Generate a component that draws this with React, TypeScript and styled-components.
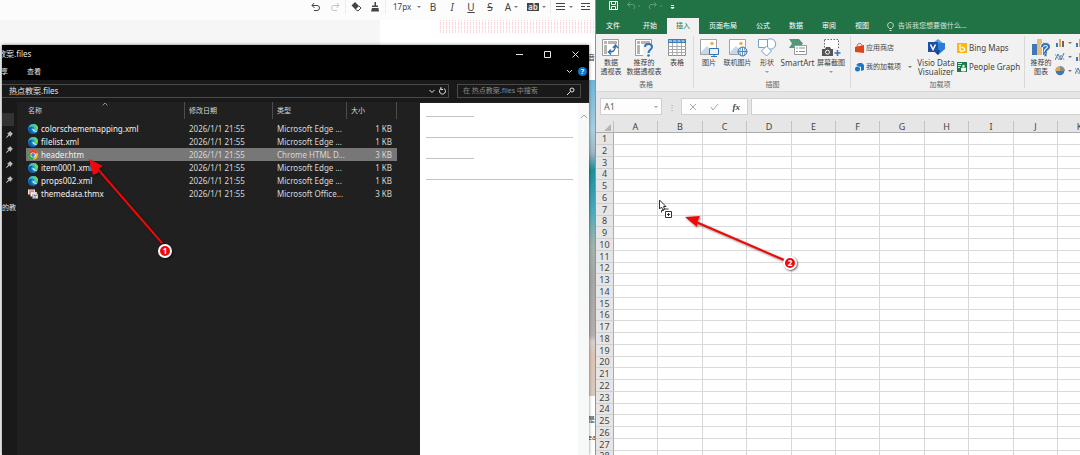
import React from "react";
import styled, { createGlobalStyle } from "styled-components";

const GlobalStyle = createGlobalStyle`
  * { box-sizing: border-box; }
  html, body { margin: 0; padding: 0; }
  body {
    font-family: "Noto Sans", "Noto Sans CJK SC", sans-serif;
    font-size: 8px;
    line-height: 10px;
    overflow: hidden;
  }
  button, input, select {
    font: inherit;
    color: inherit;
    background: none;
    border: 0;
    margin: 0;
    padding: 0;
    outline: 0;
    appearance: none;
  }
  button { white-space: nowrap; }
  svg { display: block; flex: none; }
  table { border-collapse: separate; border-spacing: 0; }
`;

const Desktop = styled.main`
  position: relative;
  display: grid;
  grid-template-columns: minmax(0, 595fr) minmax(0, 485fr);
  height: 100vh;
  overflow: hidden;
  background: #fff;
`;

const LeftSide = styled.div`
  position: relative;
  display: grid;
  min-width: 0;
  overflow: hidden;
`;

/* ---------- editor behind the file window ---------- */

const Editor = styled.section`
  position: relative;
  display: flex;
  flex-direction: column;
  min-width: 0;
  overflow: hidden;
  background: #f6f6f6;
`;

const EditorTools = styled.div`
  display: flex;
  align-items: center;
  gap: 1px;
  height: 20px;
  padding: 0 0 6px 307px;
  background: #fcfcfc;
  color: #444;
`;

const Tool = styled.button<{ $w?: number; $faint?: boolean }>`
  display: flex;
  flex: none;
  align-items: center;
  justify-content: center;
  gap: 3px;
  width: ${(p) => p.$w ?? 18}px;
  height: 14px;
  font-size: 10px;
  color: ${(p) => (p.$faint ? "#c4c4c4" : "#444")};
`;

const ToolSelect = styled.select`
  flex: none;
  width: 26px;
  padding-left: 6px;
  overflow: visible;
  font-size: 8px;
`;

const Dot = styled.span`
  flex: none;
  width: 0;
  height: 0;
  border: 2px solid transparent;
  border-top-color: currentColor;
  border-bottom: 0;
  opacity: 0.7;
`;

const DotCell = styled.span`
  display: flex;
  justify-content: center;
  width: 9px;
`;

const ToolRule = styled.span`
  flex: none;
  width: 1px;
  height: 14px;
  background: #ececec;
`;

const Highlight = styled.span`
  padding: 0 1px;
  font-size: 8px;
  line-height: 8px;
  font-weight: 700;
  color: #ddd;
  background: #444;
`;

const Sheet = styled.div`
  flex: 1;
  margin-left: 380px;
  padding-left: 60px;
  background: #fff;
`;

const Hatch = styled.div`
  height: 14px;
  background:
    repeating-linear-gradient(0deg, #fff 0 1px, transparent 1px 4px),
    repeating-linear-gradient(90deg, #fad7db 0 1px, #fff 1px 3px);
`;

const Photo = styled.div`
  position: absolute;
  top: 80px;
  right: 0;
  width: 6px;
  height: 316px;
  background: linear-gradient(#6db5d8 0, #a9cede 50px, #9fb7c4 72px, #1d8d9c 90px, #49a9bd 130px, #9fb3ad 165px, #a5a5a5 200px, #b5aeac 255px, #d4d1cf 262px, #dcc4b2 275px, #d8c9ba 310px);
`;

const Peek = styled.span<{ $top: number }>`
  position: absolute;
  top: ${(p) => p.$top}px;
  right: 0;
  width: 7px;
  overflow: hidden;
  white-space: nowrap;
  font-size: 7px;
  color: #333;
`;

/* ---------- file window ---------- */

const Explorer = styled.section`
  position: absolute;
  top: 45px;
  right: 6px;
  bottom: 0;
  left: 2px;
  display: flex;
  flex-direction: column;
  color: #e4e4e4;
  background: #202020;
  box-shadow: 0 0 3px rgba(0, 0, 0, 0.5);
`;

const TitleBar = styled.header`
  display: flex;
  align-items: center;
  height: 18px;
  overflow: hidden;
  white-space: nowrap;
  background: #000;
`;

const Title = styled.span`
  flex: 1;
  margin-left: -4px;
`;

const WindowButton = styled.button`
  display: grid;
  place-items: center;
  width: 28px;
  height: 18px;
`;

const MenuBar = styled.nav`
  display: flex;
  align-items: center;
  height: 17px;
  overflow: hidden;
  font-size: 7px;
  background: #000;
`;

const MenuItem = styled.button<{ $cut?: boolean }>`
  margin-left: ${(p) => (p.$cut ? "-1px" : "19px")};
`;

const MenuEnd = styled.div`
  display: flex;
  align-items: center;
  gap: 5px;
  margin: 0 2px 0 auto;
`;

const Help = styled.button`
  width: 9px;
  height: 9px;
  border-radius: 5px;
  font-weight: 700;
  font-size: 7px;
  line-height: 9px;
  color: #fff;
  background: #0b78d0;
`;

const AddressRow = styled.div`
  display: flex;
  gap: 8px;
  height: 22px;
  padding: 4px 8px 4px 0;
  background: #191919;
`;

const AddressBox = styled.div`
  display: flex;
  flex: 1;
  align-items: center;
  gap: 4px;
  padding: 0 2px 0 7px;
  border: 1px solid #4a4a4a;
  border-left: 0;
`;

const Path = styled.span`
  flex: 1;
`;

const SearchBox = styled.label`
  display: flex;
  align-items: center;
  width: 124px;
  padding: 0 5px;
  border: 1px solid #4a4a4a;
  font-size: 7px;
  & input { flex: 1; min-width: 0; }
  & input::placeholder { color: #8a8a8a; opacity: 1; }
`;

const ExplorerBody = styled.div`
  display: flex;
  flex: 1;
  min-height: 0;
`;

const NavPane = styled.aside`
  display: flex;
  flex-direction: column;
  width: 15px;
  padding-top: 11px;
  overflow: hidden;
  background: #191919;
`;

const NavActive = styled.div`
  height: 13px;
  margin: 0 3px 1px 0;
  background: #333;
`;

const PinRow = styled.div`
  display: flex;
  align-items: center;
  justify-content: center;
  height: 15px;
`;

const NavText = styled.div`
  padding-top: 16px;
  overflow: hidden;
  font-size: 7px;
  white-space: nowrap;
`;

const Listing = styled.div`
  flex: 1;
  min-width: 0;
  padding-left: 9px;
`;

const Files = styled.table`
  table-layout: fixed;
  width: 371px;
  color: #d6d6d6;
  & col:nth-child(1) { width: 159px; }
  & col:nth-child(2) { width: 88px; }
  & col:nth-child(3) { width: 74px; }
`;

const FileHead = styled.th<{ $sorted?: boolean }>`
  height: 20px;
  padding: 0 0 2px ${(p) => (p.$sorted ? 2 : 4)}px;
  font-size: 7px;
  font-weight: 400;
  text-align: left;
  background: linear-gradient(#4c4c4c, #4c4c4c) right 0 top 0 / 1px 17px no-repeat;
`;

const HeadInner = styled.span`
  display: flex;
  align-items: flex-start;
  justify-content: space-between;
  height: 10px;
  padding-right: 77px;
  & svg { margin-top: -4px; opacity: 0.6; }
`;

const FileRow = styled.tr<{ $selected?: boolean }>`
  background: ${(p) => (p.$selected ? "#777" : "none")};
`;

const FileCell = styled.td<{ $right?: boolean }>`
  height: 13px;
  padding: 0 ${(p) => (p.$right ? 5 : 0)}px 0 4px;
  overflow: hidden;
  text-align: ${(p) => (p.$right ? "right" : "left")};
  white-space: nowrap;
`;

const FileName = styled.span`
  display: flex;
  align-items: center;
  gap: 3px;
  margin-left: -2px;
  color: #f0f0f0;
`;

const Preview = styled.div`
  display: flex;
  width: 169px;
  margin-top: 1px;
  background: #fff;
`;

const PreviewPage = styled.div`
  flex: 1;
  padding: 13px 5px 0 6px;
`;

const PreviewLine = styled.hr<{ $short?: boolean }>`
  width: ${(p) => (p.$short ? "48px" : "100%")};
  height: 1px;
  margin: 0 0 20px;
  border: 0;
  background: #c4c4c4;
`;

const PreviewScroll = styled.div`
  display: flex;
  justify-content: center;
  width: 11px;
  padding-top: 10px;
  color: #a5a5a5;
  background: #f7f8f8;
`;

/* ---------- spreadsheet ---------- */

const Excel = styled.section`
  display: flex;
  flex-direction: column;
  min-width: 0;
  overflow: hidden;
  border-left: 1px solid #8d9694;
  color: #444;
  background: #e6e6e6;
`;

const QuickBar = styled.div`
  display: flex;
  flex: none;
  align-items: flex-start;
  gap: 8px;
  height: 18px;
  padding: 1px 0 0 13px;
  color: #fff;
  background: #217346;
`;

const Tabs = styled.nav`
  display: flex;
  flex: none;
  gap: 1px;
  height: 16px;
  padding-left: 1px;
  overflow: hidden;
  font-size: 7px;
  color: #fff;
  background: #217346;
`;

const Tab = styled.button<{ $active?: boolean; $file?: boolean }>`
  flex: none;
  padding: 0 9px;
  margin-right: ${(p) => (p.$file ? 4 : 0)}px;
  color: ${(p) => (p.$active ? "#217346" : "#fff")};
  background: ${(p) => (p.$active ? "#f1f1f1" : "none")};
`;

const Tell = styled.button`
  display: flex;
  align-items: center;
  gap: 4px;
  padding: 0 0 0 8px;
  color: #d3e5da;
`;

const Ribbon = styled.div`
  display: flex;
  flex: none;
  height: 58px;
  overflow: hidden;
  background: #f1f1f1;
  border-bottom: 1px solid #d8d8d8;
`;

const Group = styled.div<{ $w: number; $pad?: number }>`
  display: flex;
  flex: none;
  flex-direction: column;
  width: ${(p) => p.$w}px;
  padding: 4px 0 0 ${(p) => p.$pad ?? 0}px;
  background: linear-gradient(#d9d9d9, #d9d9d9) right 0 top 2px / 1px 52px no-repeat;
`;

const GroupItems = styled.div`
  display: flex;
  height: 42px;
`;

const GroupName = styled.div`
  font-size: 7px;
  text-align: center;
  color: #666;
`;

const Big = styled.button<{ $w: number; $latin?: boolean }>`
  display: flex;
  flex: none;
  flex-direction: column;
  align-items: center;
  gap: 1px;
  width: ${(p) => p.$w}px;
  font-size: ${(p) => (p.$latin ? 8 : 7)}px;
  line-height: 9px;
`;

const BigLabel = styled.span`
  display: flex;
  flex-direction: column;
  align-items: center;
`;

const CaretLine = styled.span`
  display: grid;
  place-items: center;
  height: 9px;
  color: #777;
`;

const Stack = styled.div<{ $w: number }>`
  display: flex;
  flex: none;
  flex-direction: column;
  gap: 7px;
  width: ${(p) => p.$w}px;
  padding-top: 4px;
`;

const Small = styled.button<{ $latin?: boolean }>`
  display: flex;
  align-items: center;
  gap: 2px;
  height: 12px;
  font-size: ${(p) => (p.$latin ? 8 : 7)}px;
  & > ${Dot} { margin-left: 5px; }
`;

const ChartGrid = styled.div`
  display: grid;
  grid-template-columns: 20px 20px;
  grid-auto-rows: 14px;
  flex: none;
`;

const ChartButton = styled.button`
  display: flex;
  align-items: flex-start;
  gap: 3px;
  & ${Dot} { margin-top: 4px; }
`;

const FormulaRow = styled.div`
  display: flex;
  align-items: center;
  height: 29px;
  padding: 0 0 0 4px;
  flex: none;
`;

const Box = styled.div<{ $w?: number }>`
  display: flex;
  flex: ${(p) => (p.$w ? "none" : 1)};
  align-items: center;
  width: ${(p) => (p.$w ? p.$w + "px" : "auto")};
  height: 17px;
  margin-right: 3px;
  border: 1px solid #d0d0d0;
  background: #fdfdfd;
  &:last-child { margin-right: -1px; }
  & input { flex: 1; min-width: 0; height: 100%; padding-left: 3px; font-size: 9px; color: #666; }
`;

const FormulaTool = styled.button`
  display: grid;
  flex: 1;
  place-items: center;
  font-size: 9px;
  color: #aaa;
`;

const CaretButton = styled.button`
  display: grid;
  place-items: center;
  width: 11px;
  height: 15px;
  color: #777;
`;

const Grip = styled.span`
  width: 16px;
  padding-right: 2px;
  text-align: center;
  color: #999;
`;

const FxLabel = styled.i`
  font-family: "Liberation Serif", serif;
  font-weight: 700;
  color: #444;
`;

const Cells = styled.table`
  flex: none;
  table-layout: fixed;
  width: 506px;
  font-size: 9px;
  & col { width: 44px; }
  & col:nth-child(5n + 3), & col:nth-child(5n) { width: 45px; }
  & col:first-child { width: 18px; }
`;

const ColHead = styled.th`
  height: 12px;
  padding: 0;
  font-weight: 400;
  line-height: 11px;
  border-right: 1px solid #c2c2c2;
  border-bottom: 1px solid #ababab;
`;

const Corner = styled(ColHead)`
  & svg { margin: 2px 2px 0 auto; }
`;

const CellRow = styled.tr<{ $tight: boolean }>`
  height: ${(p) => (p.$tight ? 11 : 12)}px;
`;

const RowHead = styled.th`
  padding: 0;
  font-weight: 400;
  line-height: 10px;
  border-right: 1px solid #ababab;
  border-bottom: 1px solid #cfcfcf;
`;

const Cell = styled.td`
  padding: 0;
  background: #fff;
  border-right: 1px solid #d8d8d8;
  border-bottom: 1px solid #dadada;
`;

/* ---------- annotations laid over both windows ---------- */

const Overlay = styled.div<{ $x: number; $y: number }>`
  position: absolute;
  left: ${(p) => p.$x}px;
  top: ${(p) => p.$y}px;
  pointer-events: none;
`;

const Arrow = styled.svg`
  filter: drop-shadow(1px 1px 1px rgba(0, 0, 0, 0.5));
`;

const Badge = styled.span`
  display: block;
  width: 14px;
  height: 14px;
  border: 2px solid #fff;
  border-radius: 7px;
  font-weight: 700;
  font-size: 8px;
  line-height: 10px;
  text-align: center;
  color: #fff;
  background: #f00808;
  box-shadow: 1px 1px 2px rgba(0, 0, 0, 0.6);
`;

/* ---------- icons ---------- */

const Stroke = ({ d, w = 10, h = 10, sw = 1 }: { d: string; w?: number; h?: number; sw?: number }) => (
  <svg width={w} height={h} viewBox={`0 0 ${w} ${h}`} fill="none" stroke="currentColor" strokeWidth={sw}>
    <path d={d} />
  </svg>
);

const EdgeIcon = () => (
  <svg width="10" height="10" viewBox="0 0 20 20">
    <circle cx="10" cy="10" r="10" fill="#1683d0" />
    <path d="M1 7C3 2 7 0 11 0c5 0 9 4 9 8 0 3-3 5-6 5-2 0-3-1-2-2 2-3 0-6-4-6C5 5 2 6 1 7Z" fill="#43c6b0" />
    <path d="M12 0c5 1 8 4 8 8 0 3-3 5-6 5-1 0-2 0-2-1 4-2 4-8 0-12Z" fill="#6bd35c" />
    <path d="M7 8c-3 5 1 11 8 10-6 4-14 1-14-6 0-4 3-7 7-6Z" fill="#0f5cab" />
    <path d="M9 9c-1 4 3 8 9 6l1-2c-3 1-7 1-7-2Z" fill="#e8f6fb" />
  </svg>
);

const ChromeIcon = () => (
  <svg width="10" height="10" viewBox="0 0 20 20">
    <circle cx="10" cy="10" r="10" fill="#f6c21c" />
    <path d="M10 10 1.3 5A10 10 0 0 1 18.7 5Z" fill="#e5402f" />
    <path d="M10 10 1.3 5A10 10 0 0 0 10 20l4-8Z" fill="#2fa24f" />
    <circle cx="10" cy="10" r="5" fill="#fff" />
    <circle cx="10" cy="10" r="3.8" fill="#3d7fe8" />
  </svg>
);

const ThemeIcon = () => (
  <svg width="10" height="10" viewBox="0 0 20 20">
    <path d="M0 1h14v10H0z" fill="#f3e7e5" />
    <path d="M2 3h10v2H2zM2 7h6v2H2z" fill="#c2504a" />
    <path d="M5 6h13v9H5z" fill="#fff" stroke="#b05a58" />
    <path d="M9 10h11v9H9z" fill="#dfe6ee" stroke="#777" />
    <path d="M11 13h7M11 16h5" stroke="#4a6a96" strokeWidth="1.5" />
  </svg>
);

const PinIcon = () => (
  <svg width="7" height="7" viewBox="0 0 14 14" fill="#bdbdbd">
    <path d="m8 0 6 6-2 1-2 3v2L7 9l-6 5-1-1 5-6-3-3h2l3-2Z" />
  </svg>
);

const PivotIcon = ({ question }: { question?: boolean }) => (
  <svg width="20" height="19" viewBox="0 0 20 19" fill="none">
    <path d="M1.500 1.500h16v16h-16z" fill="#fff" stroke="#9b9b9b" />
    <path d="M3 3h3v3H3zM7 3h9v3H7zM3 7h3v9H3z" fill="#b5b5b5" />
    {question ? (
      <>
        <path d="M9 6h11v13H9z" fill="#f1f1f1" />
        <path d="M11 9c0-4 7-4 7 0 0 2.500-3.500 2.500-3.500 6" stroke="#3472b5" strokeWidth="2" />
        <circle cx="14.500" cy="17.500" r="1.300" fill="#3472b5" />
      </>
    ) : (
      <path d="M8 14c4 0 6-1 6.500-6M12 10l2.500-3 2.500 3M10 11.500 7.500 14l2.500 2.500" stroke="#3472b5" strokeWidth="1.500" />
    )}
  </svg>
);

const TableIcon = () => (
  <svg width="20" height="19" viewBox="0 0 20 19">
    <path d="M1.500 1.500h17v16h-17z" fill="#fff" stroke="#8e8e8e" />
    <path d="M1 1h18v4H1z" fill="#3d7cbd" />
    <path d="M2 3h16" stroke="#fff" strokeDasharray="3 1.200" />
    <path d="M1 8.500h18M1 11.500h18M1 14.500h18M5.500 5v13M10 5v13M14.500 5v13" stroke="#a8a8a8" />
  </svg>
);

const PictureIcon = ({ online }: { online?: boolean }) => (
  <svg width="20" height="19" viewBox="0 0 20 19" fill="none">
    <path d="M1.500 1.500h16v15h-16z" fill="#fff" stroke="#a3a3a3" />
    <circle cx="13" cy="5.500" r="1.800" fill="#e8b64a" />
    <path d="m2 14 6-6 6 6v2H2Z" fill="#c5d9ec" />
    {online ? (
      <>
        <circle cx="14.500" cy="13.500" r="4.500" fill="#fff" stroke="#3472b5" />
        <path d="M14.500 9v9M10 13.500h9M12.500 10q-1.500 3.500 0 7M16.500 10q1.500 3.500 0 7" stroke="#3472b5" strokeWidth=".8" />
      </>
    ) : (
      <>
        <path d="M10.500 10.500h9v6h-9z" fill="#e9f2fb" stroke="#3472b5" />
        <path d="M12 18.500h6M15 16v2" stroke="#3472b5" />
      </>
    )}
  </svg>
);

const ShapesIcon = () => (
  <svg width="20" height="19" viewBox="0 0 20 19" fill="#fff" stroke="#6fa0cf">
    <circle cx="13.500" cy="6" r="5.200" />
    <path d="M1.500 1.500h9v8h-9z" />
    <path d="m9.500 8 5 5-5 5-5-5Z" />
  </svg>
);

const SmartArtIcon = () => (
  <svg width="20" height="19" viewBox="0 0 20 19">
    <path d="M1 1h10l4 4.500-4 4.500H1l3-4.500Z" fill="#4f9a77" />
    <path d="M6.500 7.500h12v9h-12z" fill="#fff" stroke="#9a9a9a" />
    <path d="M8 10h2M8 13.500h2M11 10h6M11 13.500h6" stroke="#8d8d8d" />
  </svg>
);

const ScreenshotIcon = () => (
  <svg width="20" height="19" viewBox="0 0 20 19">
    <path d="M3.500 1.500h14v14h-14z" fill="#fff" stroke="#666" strokeDasharray="1.500 1.500" />
    <path d="M12 10h8v9h-8z" fill="#f1f1f1" />
    <path d="M1 11h3l1-2h4l1 2h2v7H1z" fill="#555" />
    <circle cx="6.500" cy="14.200" r="2" fill="#555" stroke="#fff" />
    <path d="M16.500 12v6M13.500 15h6" stroke="#3472b5" strokeWidth="1.500" />
  </svg>
);

const VisioIcon = () => (
  <svg width="20" height="19" viewBox="0 0 20 19">
    <path d="M12 1 18 6 12 9 7 5Z" fill="#41a5ee" />
    <path d="M13 5h6v6l-7 6-5-5Z" fill="#2b7cd3" />
    <path d="M7 12h7l-2 5Z" fill="#103f91" />
    <path d="M2 4h10v10H2z" fill="#1b4fa8" />
    <path d="m4.500 6.500 2.500 5 2.500-5" fill="none" stroke="#fff" strokeWidth="1.500" />
  </svg>
);

const StoreIcon = () => (
  <svg width="9" height="10" viewBox="0 0 9 10">
    <path d="M0 4 9 2v8L0 9Z" fill="#e0421b" />
    <path d="M2 4c0-4 4-5 5-1.500" fill="none" stroke="#e0421b" />
  </svg>
);

const AddinIcon = () => (
  <svg width="9" height="10" viewBox="0 0 9 10" fill="#1a78c8">
    <path d="m3 1 4 0 2 2v5L6 9V4Z" />
    <circle cx="2.500" cy="7" r="2.500" />
    <path d="M1 3 4 1l3 3-2 1Z" />
  </svg>
);

const BingIcon = () => (
  <svg width="10" height="10" viewBox="0 0 10 10">
    <path d="M0 0h10v10H0z" fill="#fbb813" />
    <path d="M3 1.500v6l1.500 1L7.500 7V5.500L4.500 4" fill="none" stroke="#fff" strokeWidth="1.300" />
  </svg>
);

const PeopleIcon = () => (
  <svg width="10" height="10" viewBox="0 0 10 10">
    <path d="M0 0h10v10H0z" fill="#1f7a4b" />
    <circle cx="6.500" cy="4" r="1.200" fill="#fff" />
    <path d="M4.500 6h4v3h-4zM1 1.500h4M1 3.500h3M1 5.500h2" fill="#fff" stroke="#fff" strokeWidth=".8" />
  </svg>
);

const ChartIcon = () => (
  <svg width="20" height="19" viewBox="0 0 20 19" fill="none">
    <path d="M1 6h5v11H1zM12 4h4v13h-4z" fill="#3f78b8" />
    <path d="M6 1h5v16H6z" fill="#e4bd7b" />
    <path d="M11 9c0-4 7-4 7 0 0 2.500-3.500 2.500-3.500 5" stroke="#f1f1f1" strokeWidth="4" />
    <path d="M11 9c0-4 7-4 7 0 0 2.500-3.500 2.500-3.500 5" stroke="#3472b5" strokeWidth="2" />
    <circle cx="14.500" cy="17" r="1.500" fill="#3472b5" stroke="#f1f1f1" strokeWidth=".5" />
  </svg>
);

const MiniBars = () => (
  <svg width="10" height="10" viewBox="0 0 10 10">
    <path d="M1 5h2v4H1z" fill="#3f78b8" />
    <path d="M4 1h2v8H4z" fill="#dca95a" />
    <path d="M7 3h2v6H7z" fill="#666" />
  </svg>
);

const MiniLines = () => (
  <svg width="10" height="10" viewBox="0 0 10 10" fill="none">
    <path d="m0 8 3-6 3 6 3-7" stroke="#3f78b8" />
    <path d="m0 2 4 6 2-5 3 5" stroke="#8a9fb5" />
  </svg>
);

const MiniPie = () => (
  <svg width="10" height="10" viewBox="0 0 10 10">
    <circle cx="5" cy="5" r="4.300" fill="#3f78b8" />
    <path d="M5 5V0a5 5 0 0 0-5 5Z" fill="#dca95a" />
    <path d="m5 5 5 0a5 5 0 0 0-5-5Z" fill="#8b8b8b" />
  </svg>
);

/* ---------- data ---------- */

const files = [
  { name: "colorschememapping.xml", type: "Microsoft Edge ...", size: "1 KB", icon: <EdgeIcon /> },
  { name: "filelist.xml", type: "Microsoft Edge ...", size: "1 KB", icon: <EdgeIcon /> },
  { name: "header.htm", type: "Chrome HTML D...", size: "3 KB", icon: <ChromeIcon />, selected: true },
  { name: "item0001.xml", type: "Microsoft Edge ...", size: "1 KB", icon: <EdgeIcon /> },
  { name: "props002.xml", type: "Microsoft Edge ...", size: "1 KB", icon: <EdgeIcon /> },
  { name: "themedata.thmx", type: "Microsoft Office...", size: "3 KB", icon: <ThemeIcon /> },
];

const columns = "ABCDEFGHIJK".split("");
const rows = Array.from({ length: 28 }, (_, i) => i + 1);
const tabs = ["文件", "开始", "插入", "页面布局", "公式", "数据", "审阅", "视图"];

const EditorWindow = () => (
  <Editor>
    <EditorTools>
      <Tool aria-label="撤销"><Stroke d="M3 1 1 3.500 3.500 6M1 3.500h5a2.500 2.500 0 0 1 0 5H3" /></Tool>
      <Tool aria-label="重做" $faint><Stroke d="m7 1 2 2.500L6.500 6M9 3.500H4a2.500 2.500 0 0 0 0 5h3" /></Tool>
      <ToolRule />
      <Tool aria-label="清除格式">
        <svg width="11" height="10" viewBox="0 0 11 10">
          <path d="m4 0 4 4-3.500 3.500-4-4Z" fill="#444" />
          <path d="m8 4 2 2-3 3-2.500-1.500" fill="none" stroke="#444" />
        </svg>
      </Tool>
      <Tool aria-label="格式刷">
        <svg width="10" height="10" viewBox="0 0 10 10" fill="#444">
          <path d="M4.500 0h1.500v3.500h2V5h-6V3.500h2.500zM2 6h6.500L9 9.500H1Z" />
        </svg>
      </Tool>
      <ToolRule />
      <ToolSelect aria-label="字号" defaultValue="17px"><option>17px</option></ToolSelect>
      <DotCell><Dot /></DotCell>
      <Tool>B</Tool>
      <Tool><i>I</i></Tool>
      <Tool><u>U</u></Tool>
      <Tool><s>S</s></Tool>
      <Tool $w={23}>A<Dot /></Tool>
      <Tool $w={25}><Highlight>ab</Highlight><Dot /></Tool>
      <ToolRule />
      <Tool $w={24} aria-label="对齐"><Stroke d="M0 1.500h9M0 4.500h9M0 7.500h9" /><Dot /></Tool>
      <Tool aria-label="缩进"><Stroke d="M0 1.500h9M0 4.500h4M6 4.500h3M0 7.500h9" /></Tool>
    </EditorTools>
    <Sheet><Hatch /></Sheet>
    <Photo />
    <Peek $top={53}>音</Peek>
    <Peek $top={415}>是</Peek>
    <Peek $top={433}>ea</Peek>
  </Editor>
);

const FileWindow = () => (
  <Explorer>
    <TitleBar>
      <Title>教案.files</Title>
      <WindowButton aria-label="最小化"><Stroke w={7} h={7} d="M0 3.500h7" /></WindowButton>
      <WindowButton aria-label="最大化"><Stroke w={7} h={7} d="M.5.5h6v6h-6z" /></WindowButton>
      <WindowButton aria-label="关闭"><Stroke w={7} h={7} d="m.5.5 6 6m0-6-6 6" /></WindowButton>
    </TitleBar>
    <MenuBar>
      <MenuItem $cut>享</MenuItem>
      <MenuItem>查看</MenuItem>
      <MenuEnd>
        <Stroke w={7} h={5} d="m1 1 2.500 2.500L6 1" />
        <Help>?</Help>
      </MenuEnd>
    </MenuBar>
    <AddressRow>
      <AddressBox>
        <Path>热点教案.files</Path>
        <Stroke w={6} h={5} d="m.5 1 2.500 2.500L5.500 1" />
        <Stroke w={7} h={8} d="M5 1.500a3 3 0 1 1-3 0M2 0v2.500h2" />
      </AddressBox>
      <SearchBox>
        <input type="search" aria-label="搜索" placeholder="在 热点教案.files 中搜索" />
        <Stroke w={8} h={8} d="M7 3a2 2 0 1 1-4 0 2 2 0 0 1 4 0ZM3.500 4.500 0 8" />
      </SearchBox>
    </AddressRow>
    <ExplorerBody>
      <NavPane>
        <NavActive />
        {[0, 1, 2, 3].map((n) => <PinRow key={n}><PinIcon /></PinRow>)}
        <NavText>的教</NavText>
      </NavPane>
      <Listing>
        <Files>
          <colgroup><col /><col /><col /><col /></colgroup>
          <thead>
            <tr>
              <FileHead $sorted><HeadInner>名称<Stroke w={6} h={4} d="m.5 3.500 2.500-2.500 2.500 2.500" /></HeadInner></FileHead>
              <FileHead>修改日期</FileHead>
              <FileHead>类型</FileHead>
              <FileHead>大小</FileHead>
            </tr>
          </thead>
          <tbody>
            {files.map((f) => (
              <FileRow key={f.name} $selected={f.selected}>
                <FileCell><FileName>{f.icon}{f.name}</FileName></FileCell>
                <FileCell>2026/1/1 21:55</FileCell>
                <FileCell>{f.type}</FileCell>
                <FileCell $right>{f.size}</FileCell>
              </FileRow>
            ))}
          </tbody>
        </Files>
      </Listing>
      <Preview>
        <PreviewPage>
          <PreviewLine $short />
          <PreviewLine />
          <PreviewLine $short />
          <PreviewLine />
        </PreviewPage>
        <PreviewScroll><Stroke w={8} h={6} d="m1 5 3-3 3 3" /></PreviewScroll>
      </Preview>
    </ExplorerBody>
  </Explorer>
);

const ExcelWindow = () => (
  <Excel>
    <QuickBar>
      <Stroke w={9} h={9} d="M.5.5h8v8h-8zM2.500.5v3h4v-3M2.500 8.500v-3h4v3" />
      <svg width="14" height="9" viewBox="0 0 14 9" fill="none" stroke="#5f9b79">
        <path d="M4 1 1.500 3.500 4 6M1.500 3.500H6a2 2 0 0 1 1 4.500M12 5h2" />
      </svg>
      <svg width="14" height="9" viewBox="0 0 14 9" fill="none" stroke="#5f9b79">
        <path d="m6 1 2.500 2.500L6 6M8.500 3.500H4A2 2 0 0 0 3 8M12 5h2" />
      </svg>
      <Stroke w={5} h={9} d="M1 4.500h3M1 6.500h3L2.500 8Z" />
    </QuickBar>
    <Tabs>
      {tabs.map((t, i) => <Tab key={t} $file={i === 0} $active={i === 2}>{t}</Tab>)}
      <Tell>
        <Stroke w={7} h={9} d="M2.500 6.500C-.5 4 .5.5 3.500.5s4 3.500 1 6ZM2.500 8.500h2" />
        告诉我您想要做什么...
      </Tell>
    </Tabs>
    <Ribbon>
      <Group $w={98} $pad={2}>
        <GroupItems>
          <Big $w={26}><PivotIcon /><BigLabel><span>数据</span><span>透视表</span></BigLabel></Big>
          <Big $w={40}><PivotIcon question /><BigLabel><span>推荐的</span><span>数据透视表</span></BigLabel></Big>
          <Big $w={26}><TableIcon />表格</Big>
        </GroupItems>
        <GroupName>表格</GroupName>
      </Group>
      <Group $w={157}>
        <GroupItems>
          <Big $w={30}><PictureIcon />图片</Big>
          <Big $w={27}><PictureIcon online />联机图片</Big>
          <Big $w={32}><ShapesIcon /><BigLabel><span>形状</span><CaretLine><Dot /></CaretLine></BigLabel></Big>
          <Big $w={29} $latin><SmartArtIcon />SmartArt</Big>
          <Big $w={38}><ScreenshotIcon /><BigLabel><span>屏幕截图</span><CaretLine><Dot /></CaretLine></BigLabel></Big>
        </GroupItems>
        <GroupName>插图</GroupName>
      </Group>
      <Group $w={174} $pad={4}>
        <GroupItems>
          <Stack $w={60}>
            <Small><StoreIcon />应用商店</Small>
            <Small><AddinIcon />我的加载项<Dot /></Small>
          </Stack>
          <Big $w={42} $latin><VisioIcon /><BigLabel><span>Visio Data</span><span>Visualizer</span></BigLabel></Big>
          <Stack $w={64}>
            <Small $latin><BingIcon />Bing Maps</Small>
            <Small $latin><PeopleIcon />People Graph</Small>
          </Stack>
        </GroupItems>
        <GroupName>加载项</GroupName>
      </Group>
      <Group $w={90} $pad={2}>
        <GroupItems>
          <Big $w={28}><ChartIcon /><BigLabel><span>推荐的</span><span>图表</span></BigLabel></Big>
          <ChartGrid>
            <ChartButton aria-label="柱形图"><MiniBars /><Dot /></ChartButton>
            <ChartButton aria-label="层次图"><MiniBars /></ChartButton>
            <ChartButton aria-label="折线图"><MiniLines /><Dot /></ChartButton>
            <ChartButton aria-label="统计图"><MiniBars /></ChartButton>
            <ChartButton aria-label="饼图"><MiniPie /><Dot /></ChartButton>
            <ChartButton aria-label="散点图"><MiniLines /></ChartButton>
          </ChartGrid>
        </GroupItems>
      </Group>
    </Ribbon>
    <FormulaRow>
      <Box $w={62}>
        <input aria-label="名称框" defaultValue="A1" />
        <CaretButton aria-label="名称列表"><Dot /></CaretButton>
      </Box>
      <Grip>⋮</Grip>
      <Box $w={67}>
        <FormulaTool aria-label="取消"><Stroke w={8} h={8} d="m1 1 6 6m0-6-6 6" /></FormulaTool>
        <FormulaTool aria-label="输入"><Stroke w={9} h={8} d="m1 4 2 3 5-6" /></FormulaTool>
        <FormulaTool><FxLabel>fx</FxLabel></FormulaTool>
      </Box>
      <Box><input aria-label="编辑栏" /></Box>
    </FormulaRow>
    <Cells>
      <colgroup><col />{columns.map((c) => <col key={c} />)}</colgroup>
      <thead>
        <tr>
          <Corner aria-label="全选"><svg width="7" height="7" viewBox="0 0 7 7"><path d="M7 0v7H0Z" fill="#b5b5b5" /></svg></Corner>
          {columns.map((c) => <ColHead key={c}>{c}</ColHead>)}
        </tr>
      </thead>
      <tbody>
        {rows.map((r) => (
          <CellRow key={r} $tight={r % 4 === 0}>
            <RowHead>{r}</RowHead>
            {columns.map((c) => <Cell key={c} />)}
          </CellRow>
        ))}
      </tbody>
    </Cells>
  </Excel>
);

export default function App() {
  return (
    <Desktop>
      <GlobalStyle />
      <LeftSide>
        <EditorWindow />
        <FileWindow />
      </LeftSide>
      <ExcelWindow />
      <Overlay $x={87} $y={156}>
        <Arrow width="80" height="92" viewBox="0 0 80 92">
          <path d="M75 87 9 11" stroke="#f00808" strokeWidth="2" />
          <path d="m2 3 14 7-4 2-1 5-5 2Z" fill="#f00808" />
        </Arrow>
      </Overlay>
      <Overlay $x={158} $y={244}><Badge>1</Badge></Overlay>
      <Overlay $x={684} $y={212}>
        <Arrow width="104" height="52" viewBox="0 0 104 52">
          <path d="M100 48 12 10" stroke="#f00808" strokeWidth="2" />
          <path d="m1 5 15-1-3 6 0 5Z" fill="#f00808" />
        </Arrow>
      </Overlay>
      <Overlay $x={783} $y={256}><Badge>2</Badge></Overlay>
      <Overlay $x={659} $y={199}>
        <svg width="15" height="20" viewBox="0 0 15 20" fill="#fff" stroke="#333">
          <path d="M.5 1v9l2-2 1.500 3 1.500-1L4.500 7.500h2.500Z" />
          <path d="M2.500 13.500v-2h2l1-1.500h4" fill="none" />
          <path d="M6.500 12.500h6v6h-6z" />
          <path d="M9.500 14v3M8 15.500h3" />
        </svg>
      </Overlay>
    </Desktop>
  );
}
